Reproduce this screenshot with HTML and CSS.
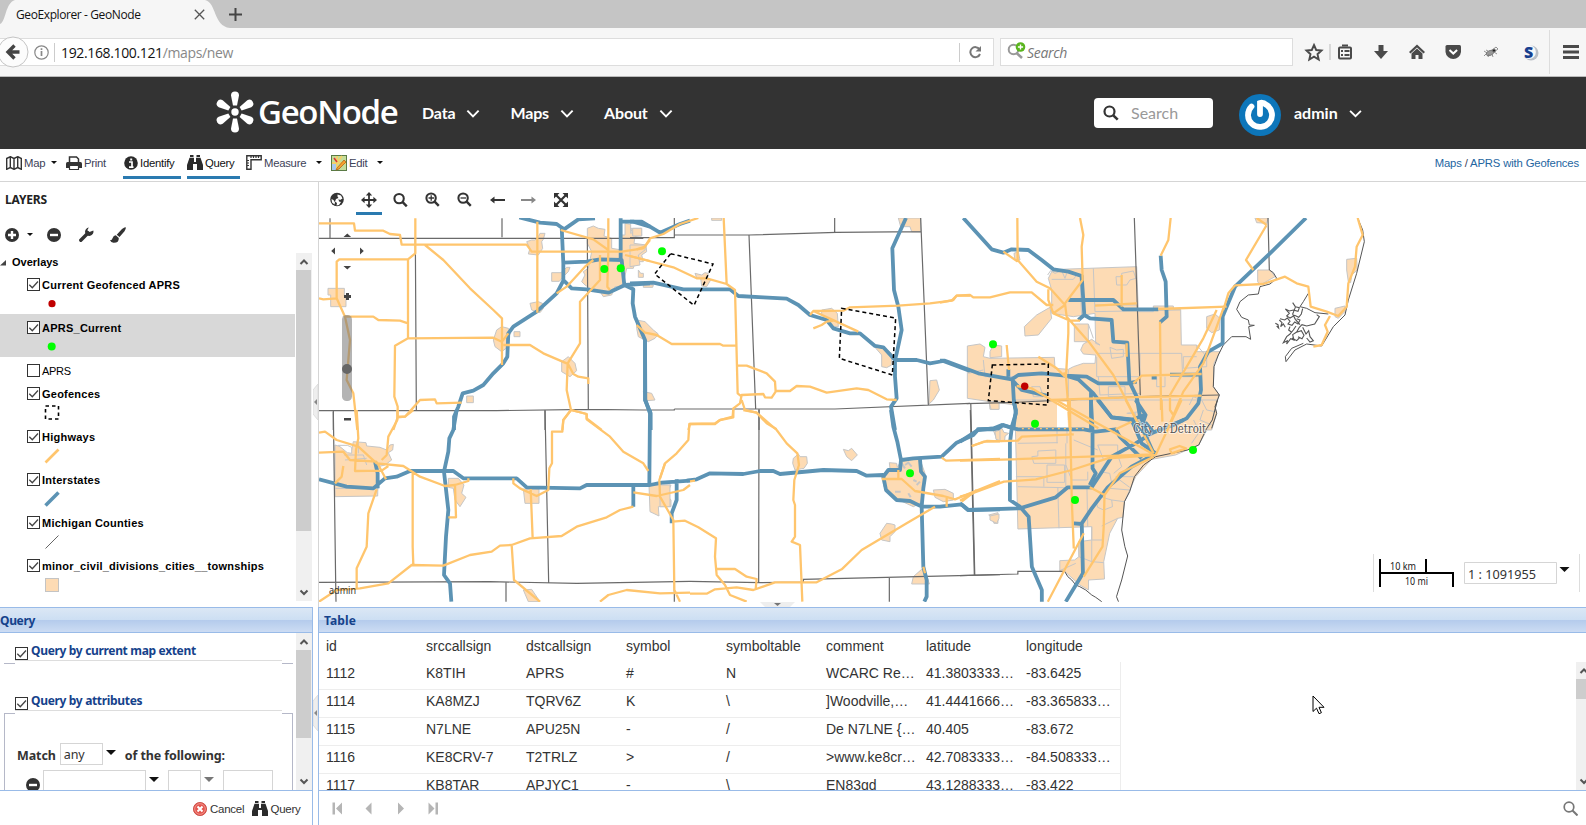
FILE: index.html
```html
<!DOCTYPE html>
<html lang="en">
<head>
<meta charset="utf-8">
<title>GeoExplorer - GeoNode</title>
<link rel="stylesheet" href="styles.css">
</head>
<body>
<svg class="defs" width="0" height="0" aria-hidden="true">
  <symbol id="chev" viewBox="0 0 12 8"><path d="M1 1.500l5 5 5-5" fill="none" stroke="currentColor" stroke-width="1.700"/></symbol>
  <symbol id="mag" viewBox="0 0 16 16"><circle cx="6.500" cy="6.500" r="5" fill="none" stroke="currentColor" stroke-width="2.200"/><path d="M10.300 10.300l4.400 4.400" stroke="currentColor" stroke-width="2.600"/></symbol>
  <symbol id="bino" viewBox="0 0 16 15"><path d="M3 0h3.500v2H3zM9.500 0H13v2H9.500zM2.500 2.700H7V7h2V2.700h4.500L16 10v5h-6V9H6v6H0v-5z" fill="#2b2b2b"/></symbol>
  <symbol id="minus" viewBox="0 0 14 14"><circle cx="7" cy="7" r="7" fill="#333"/><path d="M3 7h8" stroke="#fff" stroke-width="2.400"/></symbol>
  <symbol id="box" viewBox="0 0 13 13"><rect x=".5" y=".5" width="12" height="12" fill="#fff" stroke="#333"/></symbol>
  <symbol id="boxon" viewBox="0 0 13 13"><rect x=".5" y=".5" width="12" height="12" fill="#fff" stroke="#333"/><path d="M2.300 6.700l3 3L11 3.500" fill="none" stroke="#444" stroke-width="1.300"/></symbol>
  <symbol id="sup" viewBox="0 0 16 17"><path d="M4.500 11L8 7.500l3.500 3.500" fill="none" stroke="#555" stroke-width="2"/></symbol>
  <symbol id="sdown" viewBox="0 0 16 17"><path d="M4.500 6.500L8 10l3.500-3.500" fill="none" stroke="#555" stroke-width="2"/></symbol>
</svg>

<div class="tabs">
  <svg class="tabshape" width="232" height="28"><path d="M0 28V24C6 22 5 3 15 0H205C217 3 213 26 230 28Z" fill="#f6f6f6"/></svg>
  <div class="tabrow"><span class="tabtitle">GeoExplorer - GeoNode</span>
    <svg width="11" height="11"><path d="M.8.8l9.400 9.400M10.200.8L.8 10.200" stroke="#555" stroke-width="1.300"/></svg>
    <svg class="plus" width="13" height="13"><path d="M6.500 0v13M0 6.500h13" stroke="#444" stroke-width="2"/></svg></div>
</div>

<div class="nav">
  <div class="url">
    <svg class="back" width="32" height="32"><circle cx="14" cy="16" r="15" fill="#fcfcfc" stroke="#c4c4c4"/><path d="M20.500 16H10M15.500 9.500L9 16l6.500 6.500" fill="none" stroke="#444" stroke-width="3.400"/></svg>
    <svg class="info" width="15" height="15"><circle cx="7.500" cy="7.500" r="6.700" fill="none" stroke="#888" stroke-width="1.200"/><path d="M7.500 6v5M7.500 3.300v1.700" stroke="#888" stroke-width="1.700"/></svg>
    <i class="vsep"></i><span class="addr">192.168.100.121<em>/maps/new</em></span>
    <i class="vsep vend"></i>
    <svg class="reload" width="13" height="13"><path d="M10.500 3.300A5 5 0 1 0 11 8" fill="none" stroke="#777" stroke-width="2"/><path d="M12 0v5.500H6.500z" fill="#777"/></svg>
  </div>
  <div class="find">
    <svg width="20" height="18"><circle cx="6.500" cy="7.500" r="4.800" fill="none" stroke="#999" stroke-width="2"/><path d="M9.500 11l5.500 5" stroke="#999" stroke-width="2.600"/><circle cx="13.500" cy="5" r="4.800" fill="#5ab51e"/><path d="M13.500 2.400v5.200M10.900 5h5.200" stroke="#fff" stroke-width="1.400"/></svg>
    <span>Search</span>
  </div>
  <svg class="icons" width="293" height="48" viewBox="1293 28 293 48">
    <path d="M1314 45l2.200 5 5.300.5-4 3.700 1.200 5.300-4.700-2.800-4.700 2.800 1.200-5.300-4-3.700 5.300-.5z" fill="none" stroke="#4a4a4a" stroke-width="1.900"/>
    <path d="M1330 44v16" stroke="#bbb"/>
    <rect x="1339" y="47.500" width="12" height="11" rx="1" fill="none" stroke="#4a4a4a" stroke-width="2"/><path d="M1342 45.500h6M1341 51h2M1344.500 51h5M1341 55h2M1344.500 55h5" stroke="#4a4a4a" stroke-width="2"/>
    <path d="M1378.500 45h5v6h4.500l-7 8-7-8h4.500z" fill="#4a4a4a"/>
    <path d="M1417 44.500l8 7.500-1.500 1.500-6.500-6-6.500 6-1.500-1.500zM1411.500 53.500l5.500-5 5.500 5V59h-4v-4h-3v4h-4z" fill="#4a4a4a"/>
    <path d="M1445.500 46.500q0-1.500 1.500-1.500h12.500q1.500 0 1.500 1.500V52a7.800 7.800 0 0 1-15.500 0z" fill="#4a4a4a"/><path d="M1449.500 50l3.800 3.600 3.800-3.600" fill="none" stroke="#fff" stroke-width="2"/>
    <g stroke="#777" stroke-width=".8" fill="#999"><ellipse cx="1490" cy="53" rx="4" ry="2.400" transform="rotate(-25 1490 53)"/><path d="M1484 51l3 2-3 3M1489 54l-1 3M1492 54l1 3M1494 52l3 2M1488 51l-2-1M1491 51l5-4 2 2-4 3" fill="none"/><circle cx="1494" cy="50.500" r="1.500" fill="#222"/></g>
    <circle cx="1531" cy="53" r="7.500" fill="#b9bec5"/><circle cx="1529" cy="52" r="6.900" fill="#f5f7fa"/><text x="1524" y="58" class="sico">S</text>
    <path d="M1549.500 30v44" stroke="#ddd"/><path d="M1563 46.500h16M1563 52h16M1563 57.500h16" stroke="#4a4a4a" stroke-width="3"/>
  </svg>
</div>

<header class="site">
  <svg class="mark" width="40" height="42" viewBox="-20 -21 40 42"><g fill="#fff"><path id="petal" d="M-2-6.500L-4-16.500Q-4-20.500 0-20.500T4-16.500L2-6.500Z"/><use href="#petal" transform="rotate(60)"/><use href="#petal" transform="rotate(120)"/><use href="#petal" transform="rotate(180)"/><use href="#petal" transform="rotate(240)"/><use href="#petal" transform="rotate(300)"/><circle r="3.700"/></g></svg>
  <span class="logo">GeoNode</span>
  <nav><a>Data<svg width="14" height="9"><use href="#chev"/></svg></a><a>Maps<svg width="14" height="9"><use href="#chev"/></svg></a><a>About<svg width="14" height="9"><use href="#chev"/></svg></a></nav>
  <div class="sbox"><svg width="16" height="16"><use href="#mag"/></svg><span>Search</span></div>
  <svg class="avatar" width="42" height="42" viewBox="-21 -21 42 42"><circle r="21" fill="#0d76ba"/><path d="M-8.500-8.500A12 12 0 1 0 7-9.800Q3-13 0-12V-1" fill="none" stroke="#fff" stroke-width="5.800" stroke-linecap="round"/></svg>
  <span class="user">admin</span><svg class="uchev" width="13" height="9"><use href="#chev"/></svg>
</header>

<div class="appbar">
  <a class="t-map"><svg width="16" height="14"><path d="M.7 2.500l3.600-1.800v10.800L.7 13.300zM4.300.7L8 2.500v10.800l-3.700-1.800M8 2.500L11.700.7v10.800L8 13.300M11.700.7l3.600 1.800v10.800l-3.600-1.800" fill="none" stroke="#333" stroke-width="1.400"/></svg><span>Map</span><i class="dd"></i></a>
  <a class="t-print"><svg width="16" height="14"><path d="M3.500 7V1h7l2 2v4" fill="none" stroke="#333" stroke-width="1.500"/><path d="M0 7.500Q0 6 1.500 6h13Q16 6 16 7.500V12H0z" fill="#333"/><path d="M3.500 9.500h9v4h-9z" fill="#fff" stroke="#333" stroke-width="1.200"/></svg><span>Print</span></a>
  <a class="t-id on"><svg width="14" height="14"><circle cx="7" cy="7" r="6.800" fill="#2b2b2b"/><path d="M5 6h3v5M5 11.200h4.500" fill="none" stroke="#fff" stroke-width="1.700"/><path d="M6.200 3.500h2" stroke="#fff" stroke-width="2"/></svg><span>Identify</span></a>
  <a class="t-q on"><svg width="16" height="15"><use href="#bino"/></svg><span>Query</span></a>
  <a class="t-me"><svg width="16" height="15"><path d="M.8 14.300V.8h14.400v4H5v9.500z" fill="none" stroke="#333" stroke-width="1.400"/><path d="M5 1v2M7.500 1v2M10 1v2M12.500 1v2M1 5.500h2M1 8h2M1 10.500h2" stroke="#333" stroke-width="1.200"/></svg><span>Measure</span><i class="dd"></i></a>
  <a class="t-ed"><svg width="16" height="16"><rect x=".5" y=".5" width="15" height="15" fill="#c4dd9a" stroke="#5a7a45"/><path d="M1 8h5v7H1z" fill="#a8c9ee"/><path d="M6 1v14M1 8h14M11 1L6 8" stroke="#f1d16b" stroke-width="2"/><path d="M3 3l3 4" stroke="#d33" stroke-width="1.500"/><path d="M6 13l7-8 2 2-7 7-3 1z" fill="#f7a12d" stroke="#a85c14" stroke-width=".7"/></svg><span>Edit</span><i class="dd"></i></a>
  <div class="crumb"><b>Maps</b> / <b>APRS with Geofences</b></div>
</div>

<main>
  <section class="left">
    <div class="layers">
      <h2>LAYERS</h2>
      <div class="ltools">
        <svg width="14" height="14"><circle cx="7" cy="7" r="7" fill="#333"/><path d="M3 7h8M7 3v8" stroke="#fff" stroke-width="2.400"/></svg><i class="dd"></i>
        <svg class="rm" width="14" height="14"><use href="#minus"/></svg>
        <svg class="wr" width="15" height="15"><path d="M1.800 13.200L9 6" stroke="#333" stroke-width="3.400" stroke-linecap="round"/><path d="M14.300 3.500a4.200 4.200 0 1 1-4.500-3l-1.500 2.800 2.200 1.600z" fill="#333"/></svg>
        <svg class="br" width="16" height="16"><path d="M15.500.3q1 .8-1 4L9.500 10 6.700 7.700 12 2Q15-.3 15.500.3z" fill="#333"/><path d="M5.800 8.300l3 2.600Q9 16 3.500 15.800.8 15.500 0 13q2 .5 2.500-1.800Q3.500 8.500 5.800 8.300z" fill="#333"/></svg>
      </div>
      <div class="treewrap">
        <div class="tree">
          <div class="root"><svg width="7" height="7"><path d="M6 1v5.500H0z" fill="#444"/></svg>Overlays</div>
          <div class="node"><p><svg width="13" height="13"><use href="#boxon"/></svg><span>Current Geofenced APRS</span></p><svg class="lg" width="16" height="16"><circle cx="8" cy="7.700" r="3.600" fill="#c00000"/></svg></div>
          <div class="node sel"><p><svg width="13" height="13"><use href="#boxon"/></svg><span>APRS_Current</span></p><svg class="lg" width="16" height="16"><circle cx="7.700" cy="7.500" r="4" fill="#0f0"/></svg></div>
          <div class="node off"><p><svg width="13" height="13"><use href="#box"/></svg><span>APRS</span></p></div>
          <div class="node"><p><svg width="13" height="13"><use href="#boxon"/></svg><span>Geofences</span></p><svg class="lg" width="16" height="16"><rect x="1.500" y="1" width="13" height="13" fill="none" stroke="#000" stroke-width="1.600" stroke-dasharray="3.500 3"/></svg></div>
          <div class="node"><p><svg width="13" height="13"><use href="#boxon"/></svg><span>Highways</span></p><svg class="lg" width="16" height="16"><path d="M1.500 14.500l13-13" stroke="#ffc56d" stroke-width="2.600"/></svg></div>
          <div class="node"><p><svg width="13" height="13"><use href="#boxon"/></svg><span>Interstates</span></p><svg class="lg" width="16" height="16"><path d="M1.500 14.500l13-13" stroke="#5c93b4" stroke-width="3.600"/></svg></div>
          <div class="node"><p><svg width="13" height="13"><use href="#boxon"/></svg><span>Michigan Counties</span></p><svg class="lg" width="16" height="16"><path d="M1.500 14.500l13-13" stroke="#666" stroke-width="1"/></svg></div>
          <div class="node"><p><svg width="13" height="13"><use href="#boxon"/></svg><span>minor_civil_divisions_cities__townships</span></p><svg class="lg" width="16" height="16"><rect x="1.500" y="1.500" width="13" height="13" fill="#fddbb4" stroke="#c4c4c4"/></svg></div>
          <div class="root base">Base Maps</div>
        </div>
        <div class="sb"><svg width="16" height="17"><use href="#sup"/></svg><i class="th1"></i><svg class="end" width="16" height="17"><use href="#sdown"/></svg></div>
      </div>
    </div>
    <div class="query">
      <h3>Query</h3>
      <div class="qbody">
        <div class="qform">
          <div class="fs fs1"><label><svg width="13" height="13"><use href="#boxon"/></svg><span>Query by current map extent</span></label></div>
          <div class="fs fs2"><label><svg width="13" height="13"><use href="#boxon"/></svg><span>Query by attributes</span></label>
            <div class="fsbody">
              <div class="match"><b>Match</b><span class="inp any">any</span><i class="tri"></i><b>of the following:</b></div>
              <div class="cond"><svg width="14" height="14"><use href="#minus"/></svg><span class="inp c1"></span><i class="tri"></i><span class="inp c2"></span><i class="tri dim"></i><span class="inp c3"></span></div>
            </div>
          </div>
        </div>
        <div class="sb"><svg width="16" height="17"><use href="#sup"/></svg><i class="th2"></i><svg class="end" width="16" height="17"><use href="#sdown"/></svg></div>
      </div>
      <div class="qfoot"><svg width="14" height="14"><circle cx="7" cy="7" r="6.600" fill="#e4564e" stroke="#c5413a" stroke-width=".8"/><circle cx="7" cy="7" r="5.300" fill="none" stroke="#f3a19b" stroke-width=".8"/><path d="M4.500 4.500l5 5M9.500 4.500l-5 5" stroke="#fff" stroke-width="2"/></svg><span>Cancel</span><svg class="b2" width="16" height="15"><use href="#bino"/></svg><span class="q2">Query</span></div>
    </div>
  </section>

  <div class="split"><svg width="5" height="36"><path d="M5 0L0 6v24l5 6z" fill="#eee" stroke="#ddd"/><path d="M4 15v6L1 18z" fill="#888"/></svg><svg class="s2" width="5" height="36"><path d="M5 0L0 6v24l5 6z" fill="#eee" stroke="#ddd"/><path d="M4 15v6L1 18z" fill="#888"/></svg></div>

  <section class="right">
    <div class="mtools">
      <svg width="260" height="36" viewBox="319 182 260 36" color="#333">
        <circle cx="337" cy="199.500" r="6.800" fill="#333"/><path d="M337.500 194.500l3.500 1 1.500 3-2.500 1.500-1.500-1 .5 2.500 2 .5-2 3-2.500.5.500-2.500-2-1.500 1-2.500 2.500-1-1-1.500zM331.500 199l2 1 1.500 2.500-.5 2-2.500-2z" fill="#fff"/>
        <path d="M369 194v13M362.500 200h13" stroke="#333" stroke-width="1.800"/><path d="M369 192l3.200 3.600h-6.400zM369 208l3.200-3.600h-6.400zM361 200l3.600-3.200v6.400zM377 200l-3.600-3.200v6.400z" fill="#333"/>
        <path d="M356 213.500h26" stroke="#2a7ab0" stroke-width="3"/>
        <use href="#mag" x="393" y="192.500" width="15" height="15"/><use href="#mag" x="425" y="192" width="15" height="15"/><path d="M428.500 198h5.500M431.200 195.300v5.500" stroke="#333" stroke-width="1.300"/>
        <use href="#mag" x="457" y="192" width="15" height="15"/><path d="M460.500 198h5.500" stroke="#333" stroke-width="1.300"/>
        <path d="M492 200h13" stroke="#333" stroke-width="2"/><path d="M490 200l4.500-3.500v7z" fill="#333"/>
        <path d="M521 200h13" stroke="#888" stroke-width="2"/><path d="M536 200l-4.500-3.500v7z" fill="#888"/>
        <path d="M556 195l10 10M566 195l-10 10" stroke="#333" stroke-width="2.200"/><path d="M554 193h5.500l-5.500 5.500zM568 193v5.500L562.500 193zM554 207v-5.500l5.500 5.500zM568 207h-5.500l5.500-5.500z" fill="#333"/>
      </svg>
    </div>
    <div class="mapbox">
      <svg class="map" width="1267" height="384" viewBox="319 218 1267 384">
        <g class="town">
          <g transform="translate(310 180) scale(.33333)"><path d="M54 325H103V350L108 352V380H62V345H54ZM725 278H753L770 262H780L775 275 760 290 748 304H725ZM832 145L850 138 865 145 885 148 882 168 905 175V205L935 210V165L945 165V130L962 133V160L992 145 995 165 975 170 972 190 1008 195 1010 215 995 225 1000 245H975L970 265H950L940 310 930 320H915L905 345 880 350 870 335 840 325 825 315 815 305 825 285 820 275 835 265 845 215 832 190ZM650 185L665 180H675L685 170 690 160H705L700 178 695 185 698 205 685 225 655 222 660 205ZM660 370L685 365 697 370 700 385 690 398 665 390ZM560 450L575 440 595 445 602 460 590 480 595 500 575 515 555 500 550 480ZM612 455H630V470H612ZM755 545L775 530 795 550 800 572 780 590 755 575ZM470 648H490V668H470ZM962 145H995V167H970Z"/></g>
          <g transform="translate(630 210) scale(.33333)"><path d="M8 55H35V78H8ZM0 105H47L45 120 25 135 30 165 0 170ZM25 180L32 190H40V202H25ZM40 225H70L68 232H40ZM195 190L215 195 225 188 235 190 232 205 242 210 230 230 215 228 212 205 200 203ZM20 330L45 335 70 360 85 372 75 385 55 395 25 380 20 355ZM40 545L65 550 75 570 52 572ZM575 300L605 295 622 310 625 350H605L590 330 575 315ZM735 412H760L785 430V465L770 473 755 470V435ZM805 24H872V65H845L840 50H812ZM245 24H275V31H245ZM900 512L920 510 928 540 910 570 897 582Z"/></g>
          <g transform="translate(940 210) scale(.33333)"><path class="nb" d="M82 408L120 402 135 412 130 440 150 445 343 442 345 475 385 478 400 470 430 460 465 460 467 435 430 432 422 420 430 402 455 388 480 405 467 400 465 310 400 320 335 310V240L325 205 335 185 360 178 590 170 595 305H640V288H700V298H722L724 405H770V425H840L822 460 820 530 838 555 825 590 830 610 815 660H220L228 585 150 575 82 565Z"/><path d="M253 350L290 315 330 292 335 325 295 375 255 378ZM403 342H445V395H403ZM953 180H990L1005 200 960 225 953 215ZM945 24H985L980 40 950 38ZM1220 148L1250 145 1252 180 1235 195 1232 218 1225 215 1220 180ZM1185 295L1215 288V305L1195 325 1185 320ZM800 320L825 312 840 325 838 360 815 368 800 355ZM150 425L160 405 185 408V440L150 443ZM148 575H175V598H150ZM222 130L235 125 240 150 225 150Z"/></g>
          <g transform="translate(960 400) scale(.3992 .33333)"><path class="nb" d="M137 0H645L632 60 598 135 540 165 480 178 440 230 412 305 408 352 395 355 375 400 360 485 362 537 322 540V570L300 555 262 514 250 515V482L287 480 298 470 297 425 330 420V380L145 387Z"/><path d="M72 4H98V28H78ZM84 92L98 90 105 85 110 97 122 100 113 108 112 120 105 125 92 118ZM72 345L95 338V370L85 370 82 355Z"/></g>
          <g transform="translate(310 410) scale(.33333)"><path d="M75 105L125 120 130 95 168 98 170 108 210 112 230 120 240 105 250 103 248 120 235 128 245 150 225 165 205 170 203 258 75 260ZM415 205H445L462 225 455 250 468 262 450 290 435 270 430 235 415 232ZM640 237H687V280H645ZM1017 225H1083L1070 255 1083 270V290H1045L1047 318 1020 305ZM640 540L665 538 690 575H655Z"/><path class="wh" d="M85 106H112L125 112V130L112 128Z"/></g>
          <g transform="translate(660 410) scale(.33333)"><path d="M400 145L415 132 420 140 440 140 442 160 432 175 405 180 398 160ZM550 118L565 122 575 115 592 135 575 152 560 140ZM665 195L690 175 688 158 710 160 712 172 725 150 780 148 795 190 792 250 780 280 760 290 700 262 672 230ZM820 240L855 238 880 250V270L850 275 825 262ZM660 370L680 340 695 342 705 345V365L690 380 690 395 665 390ZM760 500L785 478 795 480 808 522H755ZM990 318L1017 312V325L1010 340 990 330ZM1005 65L1020 60V92L1008 88ZM0 225H30V290H0Z"/></g>
        </g>
        <g class="sub">
          <g transform="translate(940 210) scale(.33333)"><path d="M335 208H400L410 195M323 195L332 182 345 190 365 182 375 205 380 190M460 175L465 305 720 300M420 200L425 320M528 200H545V190L580 183 588 205 570 210 560 225H530ZM465 285H590M470 430L725 430 728 500 770 500M600 430V500H470V440M510 412L530 420 550 418 550 440 515 445ZM445 342L460 385M130 450L135 500 220 500M85 490L130 480M650 500V530H675V500M770 405L800 440V470L730 475V440H770M748 585L760 560 785 570 800 600 825 605M790 600L780 630 815 645M560 610L600 605M475 500L480 555 600 550M275 530H300L310 560H280ZM385 480V560M505 530H555V560H505Z"/></g>
          <g transform="translate(960 400) scale(.3992 .33333)"><path d="M145 130L245 128M140 230H210V260M145 260L335 265M195 153L240 150V190H185L180 170 195 168ZM265 130V260M218 195H262V247H218ZM245 262L248 385M318 262L320 380M265 195L280 240H320V215M285 120L345 150M345 135H395V160L360 180 350 150ZM350 215L375 220 380 250 400 240 425 262M395 165L405 200 385 220M330 420H360M330 380V485L360 488M342 310L350 290 380 300 382 320 360 330 345 322ZM390 230H435M375 265L425 270M380 300L412 305M298 425V470L330 485M250 512L290 490M355 378L395 355M580 130L600 95 585 60M420 40H440V60L465 65M270 60L275 0M243 85V130M268 85V130"/></g>
          <g transform="translate(310 410) scale(.33333)"><path d="M103 135H160L170 165M145 98V130M105 150L170 145M75 235H205"/></g>
          <g transform="translate(660 410) scale(.33333)"><path class="dots" d="M735 165L745 158 755 170M760 210L770 215M770 225L780 215M705 245H722M745 250L752 262M725 160L735 175"/></g>
        </g>
        <path class="wh" d="M1057 402h10l1 26h-11z"/>
        <g class="cty">
          <g transform="translate(310 180) scale(.33333)"><path d="M27 175H1000M60 115V175M576 115V172M316 175L319 690M832 175L835 690M27 692H560L835 688 1000 690H1093V687M70 692V750M705 692V750"/></g>
          <g transform="translate(630 210) scale(.33333)"><path d="M0 83H133V24M133 75H357L620 67 872 65M133 597H615L1020 580M614 24V67M872 24L895 585M357 75L377 597M387 597V660"/></g>
          <g transform="translate(940 210) scale(.33333)"><path d="M583 24L601 556M80 581L200 578 600 560 838 555M984 24L988 180"/><path class="shore" d="M1253 24L1268 60 1273 95 1250 190 1225 270 1215 315 1180 350 1145 408 1100 402 1065 420 1038 455 1036 440 1055 415 1090 400M988 180L1000 188 1010 205 990 222 960 230 955 252 925 255 900 275 890 298 905 322 925 330 928 345 943 346 926 350 932 388 918 380 875 380 850 405 835 435 822 470 820 530 838 555 825 590 830 610 815 655M1105 250L1090 275 1080 290 1100 295 1125 308 1165 312"/><path class="shore delta" d="M1058 278L1066 290 1078 293 1074 304 1060 300 1048 303 1036 297 1048 310 1040 318 1050 324 1064 316 1076 322 1084 312 1088 296M1006 340L1014 344 1016 354 1010 348M1018 330L1026 338 1022 350 1030 342 1036 352M1020 326L1034 330 1042 324 1050 334 1044 342 1056 346 1064 336 1074 342 1080 330 1070 326M1068 348L1060 360 1050 372 1040 380 1030 398 1042 392 1040 402 1052 386 1062 390 1058 374 1070 366 1078 352 1086 344 1100 348 1124 342 1138 320 1130 314M1072 366L1084 362 1092 376 1086 386 1074 380M1088 352L1098 372 1106 362 1110 380 1120 392 1110 396 1100 384M1056 384L1070 392 1078 384M1066 292L1058 312 1066 328 1080 344M1050 350L1046 360 1054 366"/></g>
          <g transform="translate(960 400) scale(.3992 .33333)"><path d="M27 10L37 525M0 527L145 522V514H262"/><path class="shore" d="M645 0L632 60 618 85 598 135 570 150 490 170 460 195 437 230 425 275 412 305 405 390 413 440 420 468 405 540 392 590 397 605M262 514L270 530 280 540 290 555 300 560 315 570 330 585 340 592 355 605"/></g>
          <g transform="translate(310 410) scale(.33333)"><path d="M70 5L77 517 78 575M705 0L716 517M27 517L540 515 800 520 1140 514M588 517V575M1093 517V575"/></g>
          <g transform="translate(660 410) scale(.33333)"><path d="M297 0L296 517M90 514L300 518 430 516V508L1020 494M688 502V575M931 0L943 495"/></g>
        </g>
        <g class="inter">
          <g transform="translate(310 180) scale(.33333)"><path d="M628 112L690 128 740 132 762 148 805 118 855 115M755 140L760 250V300L785 325 830 328 895 338 945 315 1020 310M760 248L830 245 870 238 935 240 943 315 970 328 968 370 975 410 1005 480 1006 660 1020 700M932 115V240M932 125H970L1020 140M762 298L740 340 680 395 610 440 595 460 592 530 580 550 550 580 520 615 490 632 458 640 445 680 432 710V750"/></g>
          <g transform="translate(630 210) scale(.33333)"><path d="M0 35H35L90 68 150 42 180 32M0 220L70 218 160 238H300L325 258 400 262 470 266 505 285 540 315 590 330 610 355 660 370H690L735 408 760 412 795 450H860L900 460 940 453 1020 483M45 390V570L62 610V660M828 24L787 115 792 240 805 290 815 360 800 430 795 450V500L800 565 783 590 795 660"/></g>
          <g transform="translate(940 210) scale(.33333)"><path d="M70 24L155 118 190 128 215 118 265 120 305 150 340 178 385 185 425 198 433 315 450 325 515 330 520 395 562 398 568 515 590 560 600 620 620 655M385 270H520L550 298H655M662 137L665 180 677 215 680 320 660 337M433 315L415 330M1098 24L990 130 885 230 860 290 848 320V400L805 425 780 470 783 540 775 580 740 625 690 650M0 452H15L115 490 215 508 235 495 305 490 375 497 440 500 475 520 565 520 590 515M635 503H650M690 494H785M205 478V500M218 508L222 580 228 600 220 655M218 512L245 540 320 557M380 498L415 508 460 550 515 622 575 628 620 655M453 545V660M110 658L175 655 190 645 220 655"/></g>
          <g transform="translate(960 400) scale(.3992 .33333)"><path d="M135 0L140 40 130 80 125 130V300L150 320 172 350 180 500 205 570V605M0 125L45 90 85 85 105 75 145 88H310L340 95 390 88 400 110 455 175M328 0L332 90V205L340 220 325 255M560 60L480 100 440 130 380 170 330 262H270L240 292 150 325 20 330 0 310M345 0L380 52 430 60 455 130 490 160M440 0L465 45 455 80 485 160M485 165L430 200 370 262 330 325 305 370 308 520 265 605M285 370L305 372M430 60L468 42"/></g>
          <g transform="translate(310 410) scale(.33333)"><path d="M27 208L110 230 190 235 225 205 260 200 300 183H430L460 205H620L650 232 810 235 830 225H1020L1055 218 1140 212M195 155L203 190V235M440 0L430 60 418 85 415 125 402 185 415 300 408 380 402 495 420 520 424 575M1020 0L1018 220M970 220V290M1100 208V270L1085 310V340"/></g>
          <g transform="translate(660 410) scale(.33333)"><path d="M80 212L110 208 150 190 250 192 300 183H340L360 192 490 180 590 183 620 197 670 195M693 0L700 50 712 95 723 150 720 180H685L670 200 678 240 710 270 750 273 785 290 840 290 905 283 925 300 1020 298M725 150L760 145 845 140 890 98 940 75 955 58H1000L1020 50M780 148L783 185 795 200 790 235 785 290 790 470 800 510V560L793 575"/></g>
        </g>
        <g class="hwy">
          <g transform="translate(310 180) scale(.33333)"><path d="M27 130H132L135 152H220L240 162 270 165 275 194H650L665 215H935L1000 205 1020 180M316 115V220L294 238V475L255 497 253 650 263 680V712L250 750M294 238H88L80 245V355L105 410 120 480 110 600 130 640 142 750M27 355L40 358 80 355M105 410H190L205 420 270 422 294 430M294 475L550 473 575 485M345 195L400 240 480 325 550 390 576 415V555M576 485L595 460M580 495H660L700 520 770 550M773 550L790 582 805 590 835 595V612M682 125V398M752 150L850 178 895 210M895 115V215L892 320 900 330M870 225V300L810 365V490L773 550 770 630 783 690 760 720 757 750M783 690L830 702V715L875 750M740 340L770 320 825 260 850 240M263 712L285 710 330 660 375 658 380 670 455 668M945 225L1020 243"/></g>
          <g transform="translate(630 210) scale(.33333)"><path d="M20 118L45 110 60 85 100 72 150 42 205 24M0 138L130 172 200 205H230L290 222 315 240 323 550 335 560M281 24L290 222M20 345L45 368 80 375 125 402H270L280 407H320M323 467H350L410 490 435 515 437 545 425 563 405 562 400 552 335 555 330 580 310 595 308 620 270 630 255 642H180L175 660M335 570L345 600 380 608 410 640 440 658M437 543H480L500 528 540 530 590 548 680 535 715 540 770 568 800 570M540 315L550 303 640 302 660 292 805 287 900 280 965 272 980 257 1020 257M550 303L685 365M550 355L575 345 590 335 610 332"/></g>
          <g transform="translate(940 210) scale(.33333)"><path d="M0 278L40 270 50 257 90 255 100 262 150 262 210 247H275L320 285H340M232 24L233 150 290 215 330 235 375 285M190 125L233 155M420 24L430 75 425 110 428 210 375 280 380 320 450 400 520 495 600 650M545 195V290M465 287L590 280M692 24L685 90 662 137M325 238V270L340 310 385 330V370L378 500 390 660M295 440L350 475 375 500M200 405L207 480M230 528L275 535 475 655M333 570L560 562 785 557M655 297L860 290M830 300L790 385 690 555V600L700 615M850 295L790 460 730 545 690 640M885 226L865 250 850 300M885 226L970 222 1035 200 1070 220 1105 230 1112 290 1160 305 1195 318 1220 290 1225 220 1245 170 1250 110 1268 75 1253 24M980 45L918 150 940 180M950 24L980 45M1170 318L1155 345 1163 365 1145 405 1120 410M660 335L663 600M580 520L605 497 785 492M340 310L375 285M385 332H420M370 490H380M560 400V440"/></g>
          <g transform="translate(960 400) scale(.3992 .33333)"><path d="M275 0L280 300 285 445M0 182L130 178 485 163M30 138L60 125 145 122 155 110 285 103M0 290L30 280 110 245 190 238 280 210 370 175 490 165M0 302L30 280M240 0L360 80 480 160M415 0L485 160M505 0L507 65M555 0L490 165M485 170L400 220 362 285 360 380 357 440 310 530M220 605L310 400M325 262L362 285M390 88L430 65"/><path d="M526 148L550 138 566 145 530 160Z" fill="#ffc56d"/><path class="dash" d="M155 86H310"/></g>
          <g transform="translate(310 410) scale(.33333)"><path d="M27 68L45 65 80 90 145 110 200 160 280 168 330 200 405 228 435 225 438 322H415M27 128L100 125 120 150 200 155M140 0L145 85 138 120 135 183 215 182 235 168M100 168L95 200 75 220M262 0V30L235 80 230 135 215 150M262 20L285 20 310 0M200 155L228 208M200 238L175 310 170 410 140 475V535M27 575L80 540 150 535 235 520 305 465 400 467 480 435 545 425 570 407 605 405 660 385 755 378 800 350 890 322 930 300 970 290M308 183V410L310 465M605 405L612 510 690 575M610 205V220L630 235 680 258 715 240 718 175 726 160V65H757L760 30 783 0 830 12V28L900 80 940 125 1000 160 1015 183M662 237L668 385M970 247L1040 258 1120 240 1140 225M1065 160L1048 210 1050 260 1090 330 1093 540 1110 575M870 575L895 555 950 540 1050 550 1140 548M435 225L475 213V205"/></g>
          <g transform="translate(660 410) scale(.33333)"><path d="M0 205L15 160 50 130 85 90 88 42 165 40 180 30 220 22V0M250 0L290 8 350 60 380 100 412 130 417 165 403 210 400 270 405 285V380L395 395 420 405 427 575M90 214L105 212M37 335L75 332 115 352 168 385 165 440 170 495 195 525 210 555 260 575M170 477H225L260 500 290 507 287 537M90 551H140L165 538 230 532 280 540 345 517H470L545 478 605 420 740 340 825 290M715 180V208M665 207H725L765 243 850 258 885 268 1020 213M860 260V290M905 275L950 240M845 143L858 152 1020 147M935 108L980 93 1020 94M790 470L795 490"/></g>
        </g>
        <text class="city" x="1133" y="432.500" textLength="73" lengthAdjust="spacingAndGlyphs">City of Detroit</text>
        <g class="inter thin"><path d="M1137 425l8 10M1146 422l9 11M1150 434l-6-8"/></g>
        <g class="fence">
          <path transform="translate(630 210) scale(.33333)" d="M122 131L249 162 192 286 74 192ZM635 295L797 324 787 495 628 445Z"/>
          <path transform="translate(940 210) scale(.33333)" d="M157 465L325 462 323 585 145 572Z"/>
        </g>
        <g fill="#0f0"><circle cx="604.300" cy="269" r="4"/><circle cx="620.700" cy="268.300" r="4"/><circle cx="662" cy="251.300" r="4"/><circle cx="993" cy="344.300" r="4"/><circle cx="1035" cy="423.700" r="4"/><circle cx="1193" cy="450" r="4"/><circle cx="1075" cy="500" r="4"/><circle cx="910" cy="473.300" r="4"/></g>
        <circle cx="1024.700" cy="386.300" r="3.700" fill="#c00000"/>
        <g class="ctl" fill="#444"><path d="M343.500 237l3.800-3.600 3.800 3.600zM343.500 266l3.800 3.600 3.800-3.600zM335 247.500v7l-3.800-3.500zM360 247.500v7l3.800-3.500zM344 295h2v-2h3v2h2v3h-2v2h-3v-2h-2zM344 418h7v2.500h-7z"/><rect x="342" y="315" width="10" height="86" rx="4.500" fill="#777" fill-opacity=".55"/><circle cx="347" cy="369" r="5" fill="#666"/></g>
        <text class="attr" x="329" y="593.500" textLength="27" lengthAdjust="spacingAndGlyphs">admin</text>
        <path d="M1373.500 554v38M1579.500 554v38" stroke="#ddd"/>
        <path d="M1380 559v28M1380 573h74M1426 559v14M1453 573v14" stroke="#000" stroke-width="2" fill="none"/>
        <text class="sc" x="1390" y="570" textLength="26" lengthAdjust="spacingAndGlyphs">10 km</text><text class="sc" x="1405" y="585" textLength="23" lengthAdjust="spacingAndGlyphs">10 mi</text>
        <rect x="1464.500" y="562.500" width="92" height="21" fill="#fff" stroke="#d5d5d5"/><text class="ratio" x="1468" y="579" textLength="68" lengthAdjust="spacingAndGlyphs">1 : 1091955</text><path d="M1559.500 567h10l-5 5z" fill="#111"/>
      </svg>
      <svg class="vsplit" width="35" height="5"><path d="M0 0h35l-5 5H5z" fill="#eee"/><path d="M14 1h7l-3.500 3z" fill="#777"/></svg>
    </div>
    <div class="tpanel">
      <h3>Table</h3>
      <div class="grid">
        <div class="row hd"><span>id</span><span>srccallsign</span><span>dstcallsign</span><span>symbol</span><span>symboltable</span><span>comment</span><span>latitude</span><span>longitude</span></div>
        <div class="gridbody"><div class="rows">
          <div class="row"><span>1112</span><span>K8TIH</span><span>APRS</span><span>#</span><span>N</span><span>WCARC Re…</span><span>41.3803333…</span><span>-83.6425</span></div>
          <div class="row"><span>1114</span><span>KA8MZJ</span><span>TQRV6Z</span><span>K</span><span>\</span><span>]Woodville,…</span><span>41.4441666…</span><span>-83.365833…</span></div>
          <div class="row"><span>1115</span><span>N7LNE</span><span>APU25N</span><span>-</span><span>/</span><span>De N7LNE {…</span><span>40.405</span><span>-83.672</span></div>
          <div class="row"><span>1116</span><span>KE8CRV-7</span><span>T2TRLZ</span><span>&gt;</span><span>/</span><span>&gt;www.ke8cr…</span><span>42.7083333…</span><span>-84.508333…</span></div>
          <div class="row"><span>1117</span><span>KB8TAR</span><span>APJYC1</span><span>-</span><span>\</span><span>EN83gd</span><span>43.1288333…</span><span>-83.422</span></div>
        </div>
        <div class="sb wide"><svg width="16" height="17"><use href="#sup"/></svg><i class="th3"></i><svg class="end" width="16" height="17"><use href="#sdown"/></svg></div></div>
      </div>
      <div class="pager">
        <svg width="110" height="13" fill="#b5b5b5"><path d="M.5.5h2.500v12H.5zM10 .5v12L4 6.500zM39.500.5v12l-6-6zM66 .5v12l6-6zM96.500.5v12l6-6zM103.500.5h2.500v12h-2.500z" /></svg>
        <svg class="zz" width="15" height="15"><circle cx="6" cy="6" r="4.800" fill="none" stroke="#777" stroke-width="1.700"/><path d="M9.500 9.500l5 5" stroke="#777" stroke-width="2"/></svg>
      </div>
    </div>
  </section>
</main>
<svg class="cursor" width="13" height="20"><path d="M1 1v15.500l3.500-3.300L7 18.700l2.400-1L7 12.300h5z" fill="#fff" stroke="#000"/></svg>
</body>
</html>
```
FILE: styles.css
```css
* { box-sizing: border-box; }
body { margin: 0; width: 1586px; height: 825px; overflow: hidden; background: #fff; display: flex; flex-direction: column; font-family: "Liberation Sans", Arial, sans-serif; font-size: 11px; color: #222; position: relative; }
svg { display: block; flex: none; }
.defs { position: absolute; }
h2, h3, p { margin: 0; }
i { font-style: normal; flex: none; }
.dd { width: 0; height: 0; border: 3px solid transparent; border-top-color: #111; border-bottom: 0; }

/* browser chrome */
.tabs { height: 28px; background: #c5c5c5; flex: none; position: relative; }
.tabshape { position: absolute; left: 0; top: 0; }
.tabrow { position: relative; display: flex; align-items: center; height: 28px; padding-left: 16px; font: 12px "Open Sans", "Noto Sans", sans-serif; color: #111; }
.tabtitle { width: 178px; white-space: nowrap; letter-spacing: -.4px; }
.plus { margin-left: 24px; }
.nav { height: 49px; flex: none; background: #f6f6f6; border-bottom: 1px solid #bbb; display: flex; align-items: center; }
.url { width: 994px; height: 28px; background: #fff; border: 1px solid #ddd; border-left: 0; display: flex; align-items: center; }
.back { margin: 0 3px 0 -1px; }
.info { flex: none; }
.vsep { width: 1px; height: 19px; background: #ccc; margin-left: 5px; }
.addr { font: 14px "Open Sans", "Noto Sans", sans-serif; color: #111; margin-left: 6px; letter-spacing: -.36px; padding-top: 1px; }
.addr em { font-style: normal; color: #888; }
.vend { margin-left: auto; margin-right: 9px; }
.reload { margin-right: 11px; }
.find { margin-left: 6px; width: 293px; height: 28px; background: #fff; border: 1px solid #ddd; display: flex; align-items: center; padding-left: 6px; }
.find svg { margin-top: -3px; }
.find span { font: italic 14px "Open Sans", "Noto Sans", sans-serif; color: #777; letter-spacing: -.3px; padding-top: 1px; }
.sico { font: 800 16px "Open Sans", sans-serif; fill: #17408f; }

/* site header */
.site { height: 72px; flex: none; background: #333; display: flex; align-items: center; color: #fff; font: bold 16px Lato, sans-serif; padding-left: 215px; }
.mark { margin-top: -2px; }
.logo { font: 600 33px "Open Sans", sans-serif; width: 164px; margin-left: 3px; line-height: 40px; letter-spacing: -1.3px; margin-top: -3px; }
.site nav { display: flex; width: 672px; margin-top: -2px; }
.site nav a { display: flex; align-items: center; letter-spacing: -.15px; }
.site nav a svg { margin: 2px 30px 0 11px; }
.sbox { width: 119px; height: 30px; background: #fff; border-radius: 4px; color: #999; display: flex; align-items: center; padding: 0 0 1px 9px; font-weight: normal; }
.sbox svg { color: #333; margin-right: 12px; }
.avatar { margin: 4px 13px 0 26px; }
.user { margin-right: 11px; margin-top: -2px; }

/* application toolbar */
.appbar { height: 33px; flex: none; border-bottom: 1px solid #d5d5d5; display: flex; padding-left: 6px; font-size: 11.300px; letter-spacing: -.25px; color: #3d4258; }
.appbar a { display: flex; align-items: center; height: 30px; border-bottom: 3px solid transparent; white-space: nowrap; }
.appbar a span { margin-left: 2px; }
.appbar a.on { border-color: #2a7ab0; color: #111; }
.t-map { width: 60px; }
.t-map .dd { margin-left: 6px; }
.t-print { width: 57px; }
.t-id { width: 58px; margin-right: 6px; padding-left: 1px; }
.t-q { width: 53px; margin-right: 6px; }
.t-me { width: 85px; }
.t-me .dd { margin-left: 10px; }
.t-ed .dd { margin-left: 10px; }
.crumb { margin-left: auto; padding: 8px 7px 0 0; font-size: 11.300px; letter-spacing: -.15px; }
.crumb b { font-weight: normal; color: #24659f; }

main { flex: 1; display: flex; min-height: 0; }
.left { width: 313px; display: flex; flex-direction: column; }
.layers { height: 425px; flex: none; display: flex; flex-direction: column; }
h2 { font: bold 12px/36px "Noto Sans", "Open Sans", sans-serif; padding-left: 5px; height: 36px; letter-spacing: -.2px; }
.ltools { height: 35px; display: flex; align-items: center; padding: 0 0 2px 5px; }
.ltools .dd { margin-left: 8px; }
.ltools .rm { margin-left: 14px; }
.ltools .wr { margin-left: 18px; }
.ltools .br { margin-left: 16px; }
.treewrap { height: 348px; display: flex; }
.tree { width: 295px; overflow: hidden; font-weight: bold; font-size: 11px; color: #000; }
.root { height: 18px; display: flex; align-items: center; gap: 5px; }
.base { padding-left: 12px; height: 22px; }
.node { height: 43px; padding: 4px 0 0 27px; }
.node p { display: flex; align-items: center; gap: 2px; height: 18px; white-space: nowrap; letter-spacing: .24px; }
.node p span { padding-top: 1px; }
.node .lg { margin: 3px 0 0 17px; }
.sel { background: #d8d8d8; }
.off { height: 23px; font-weight: normal; }
.node.off p { letter-spacing: -.3px; }
.sb { width: 16px; background: #f0f0f0; margin-left: 1px; display: flex; flex-direction: column; }
.sb i { width: 15px; background: #cdcdcd; }
.sb .end { margin-top: auto; }
.th1 { height: 261px; }
.th2 { height: 88px; }
.th3 { height: 20px; }

h3 { height: 26px; font: bold 12px/26px "Noto Sans", "Open Sans", sans-serif; color: #15428b; border-top: 1px solid #99bbe8; border-bottom: 1px solid #99bbe8; background: linear-gradient(#dbe7f5, #cddff3 48%, #b4cbec 50%, #ccdcf3); letter-spacing: -.35px; }
.query { height: 218px; border-right: 1px solid #99bbe8; }
.qbody { height: 158px; border-bottom: 1px solid #99bbe8; display: flex; }
.qform { width: 295px; overflow: hidden; padding: 10px 2px 0 4px; }
.qform label { display: flex; width: 267px; height: 18px; border-bottom: 1px solid #ddd; gap: 3px; margin-left: 11px; background: #fff; align-items: flex-start; }
.qform label svg { margin-top: 4px; }
.qform label span { font: bold 12px/18px "Noto Sans", "Open Sans", sans-serif; color: #15428b; white-space: nowrap; letter-spacing: -.33px; margin-top: -1px; }
.fs { width: 289px; height: 50px; background: linear-gradient(#b5b8c8, #b5b8c8) 0 20px / 11px 1px no-repeat, linear-gradient(#b5b8c8, #b5b8c8) 278px 20px / 11px 1px no-repeat; }
.fs2 { height: 120px; }
.fsbody { margin-top: 2px; height: 120px; border: solid #b5b8c8; border-width: 0 1px; padding: 30px 0 0 12px; }
.match { display: flex; align-items: center; height: 22px; font: 12.500px "Noto Sans", "Open Sans", sans-serif; color: #333; letter-spacing: -.1px; }
.match b { padding-top: 2px; }
.inp { border: 1px solid #d5d5d5; height: 22px; flex: none; }
.any { width: 43px; margin: 0 3px 0 4px; padding: 2px 0 0 3px; }
.tri { width: 0; height: 0; border: 5px solid transparent; border-top-color: #111; border-bottom: 0; margin: -3px 9px 0 0; }
.dim { border-top-color: #777; }
.cond { display: flex; align-items: center; margin-top: 4px; padding-left: 9px; }
.cond svg { margin: 9px 3px 0 0; }
.c1 { width: 103px; margin-right: 3px; }
.c2 { width: 33px; margin-right: 3px; }
.c3 { width: 50px; }
.qfoot { display: flex; align-items: center; height: 34px; padding: 1px 0 0 193px; font-size: 11.500px; letter-spacing: -.25px; color: #333; }
.qfoot span { margin-left: 3px; width: 44px; }

.split { width: 5px; padding-top: 202px; }
.split .s2 { margin-top: 275px; }
.right { flex: 1; display: flex; flex-direction: column; border-left: 1px solid #d5d5d5; min-width: 0; }
.mtools { height: 36px; flex: none; }
.mapbox { height: 389px; flex: none; }
.vsplit { margin-left: 441px; }
.map path, .map rect { vector-effect: non-scaling-stroke; }
.town path { fill: #fddbb4; stroke: #c6c6c6; stroke-width: 1; }
.town .wh, .wh { fill: #fff; }
.sub path { fill: none; stroke: #c6c6c6; stroke-width: 1; }
.sub .dots { stroke-width: 2; }
.cty path { fill: none; stroke: #6a6a6a; stroke-width: 1.200; }
.cty .shore { stroke-width: 1; stroke: #555; }
.cty .delta { stroke-width: 1.100; }
.inter path { fill: none; stroke: #5c93b4; stroke-width: 3.800; stroke-linejoin: round; }
.inter.thin path { stroke-width: 2; }
.hwy path { fill: none; stroke: #ffc56d; stroke-width: 2.300; stroke-linejoin: round; }
.hwy .dash { stroke-width: 1.200; stroke-dasharray: 2 4; }
.fence path { fill: none; stroke: #000; stroke-width: 1.500; stroke-dasharray: 4 3; }
.city { font: 12px "DejaVu Serif", serif; fill: #555; stroke: #fff; stroke-opacity: .6; stroke-width: 2; paint-order: stroke; }
.attr { font: 11px "Noto Sans", sans-serif; fill: #333; }
.sc { font: 10px "Noto Sans", sans-serif; fill: #222; }
.ratio { font: 12.500px "Noto Sans", sans-serif; fill: #333; }

.tpanel { height: 218px; margin-left: -1px; border-left: 1px solid #99bbe8; }
.tpanel h3 { padding-left: 5px; letter-spacing: .1px; }
.grid { height: 158px; border-bottom: 1px solid #99bbe8; overflow: hidden; font-size: 14px; color: #333; }
.row { display: flex; height: 28px; width: 802px; line-height: 23px; border-right: 1px solid #ededed; border-bottom: 1px solid #ededed; }
.row span { width: 100px; padding-left: 7px; white-space: nowrap; flex: none; }
.hd { height: 29px; border: 0; line-height: 27px; }
.gridbody { display: flex; height: 129px; overflow: hidden; justify-content: space-between; margin-right: -6px; }
.gridbody .wide { height: 128px; flex: none; }
.pager { height: 34px; display: flex; align-items: center; justify-content: space-between; padding: 1px 8px 0 13px; }
.cursor { position: absolute; left: 1312px; top: 695px; }
```
